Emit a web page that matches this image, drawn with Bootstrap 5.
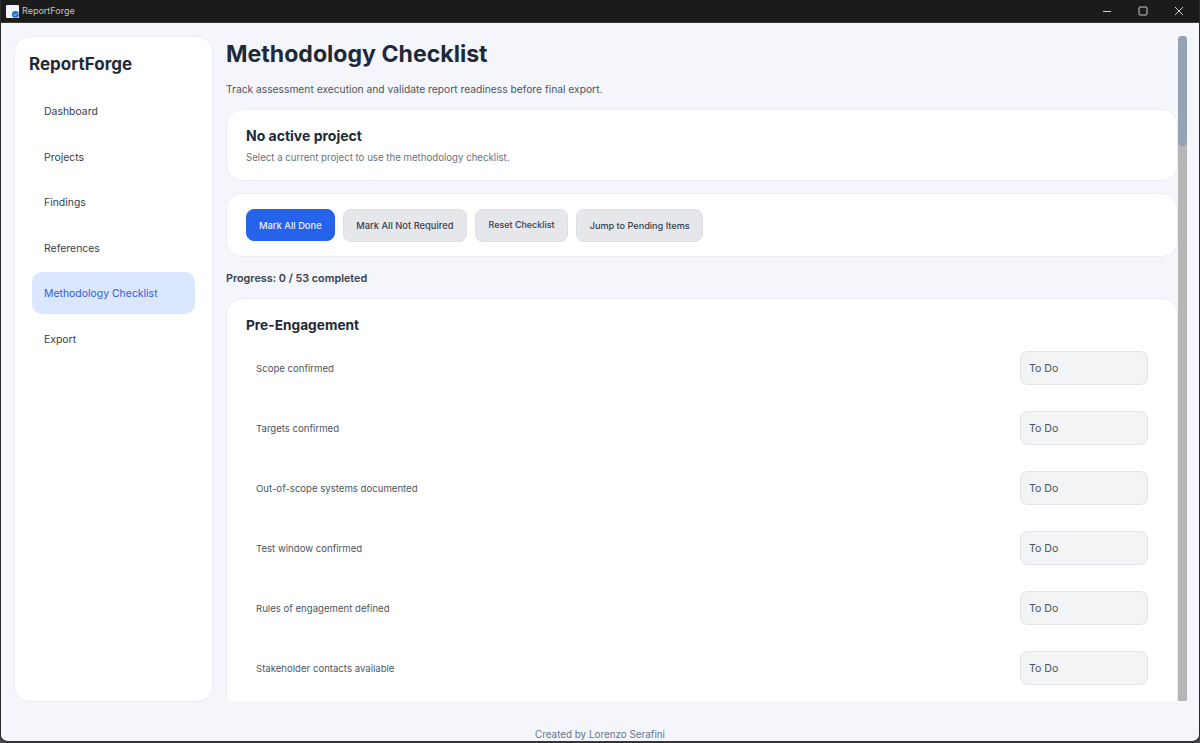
<!DOCTYPE html>
<html lang="en">
<head>
<meta charset="utf-8">
<title>ReportForge</title>
<link href="https://cdn.jsdelivr.net/npm/bootstrap@5.3.0/dist/css/bootstrap.min.css" rel="stylesheet">
<style>
html,body{height:743px;overflow:hidden;background:#4a4a4a}
body{font-family:Inter,"Liberation Sans",sans-serif;color:#1f2937}
.win-shell{width:1200px;height:743px;background:#f5f6fb;border-left:1px solid #2a2a2a;border-right:1px solid #2a2a2a;border-bottom:2px solid #333;border-radius:0 0 8px 8px;overflow:hidden}
.win-title{height:23px;margin:0 -1px;padding:0 3px 0 6px;background:#1b1b1b;color:#c4c4c4;font-size:9px;flex:none;border-bottom:1px solid #3a3a3a}
.win-ctrl{width:36px;height:23px}
.app-logo{width:13px;height:13px;margin-right:3px}
.app-body{min-height:0;padding:13px 12px 0 13px;gap:13px}
.side-panel{width:199px;height:666px;flex:none;background:#fff;border:1px solid #eceef4;border-radius:16px;padding:0 17px}
.brand-name{font-size:17px;font-weight:700;color:#1f2937;margin:16px 0 15px -3px;line-height:22px}
.side-link{display:block;height:42px;line-height:44px;margin:0 0 3.6px;padding:0 12px;border-radius:10px;font-size:10.45px;color:#374151;text-decoration:none}
.side-link.is-on{background:#dbe7fe;color:#2f5fd8}
.main-pane{width:952px;height:665px;flex:none;overflow:hidden}
.page-h{font-size:23.1px;font-weight:700;color:#1f2937;line-height:30px;margin:3px 0 0}
.page-sub{font-size:10.26px;color:#4b5563;line-height:14px;margin:13px 0 13px}
.panel-box{background:#fff;border:1px solid #eceef4;border-radius:16px;padding:0 19px}
.panel-h{font-size:14px;font-weight:700;color:#1f2937;line-height:18px}
.panel-sub-h{font-size:13.7px}
.panel-note{font-size:9.67px;color:#6b7280;line-height:13px}
.note-gap{gap:6px}
.act-btn{height:33px;font-size:9.35px;font-weight:500;color:#374151;background:#e5e7eb;border:1px solid #dcdee4;border-radius:8px;padding:1px 12.5px 0;line-height:1}
.act-btn.is-main{height:32px;padding:1px 12px 0;background:#2563eb;border-color:#2563eb;color:#e8efff}
.act-reset{font-size:8.95px}
.act-jump{font-size:9.15px}
.prog-line{font-size:10.8px;font-weight:600;color:#374151;line-height:14px;margin:15px 0 12px}
.chk-row{height:60px;padding:0 10px}
.chk-label{font-size:9.6px;color:#4b5563;padding-top:2px}
.chk-select{width:128px;height:34px;flex:none;padding:2px 8px 0;font-size:10.6px;color:#4b5563;background:#f3f4f6;border:1px solid #e1e3e9;border-radius:8px;appearance:none;font-family:inherit}
.scroll-track{width:9px;height:665px;flex:none;margin-left:-13px;background:#b5b5b5;border-radius:3px 3px 0 0;overflow:hidden}
.scroll-thumb{height:110px;background:#94a3b8;border-radius:4px}
.foot-note{height:41px;flex:none;font-size:9.85px;color:#64748b;line-height:12px;padding-top:28px}
</style>
</head>
<body>
<div class="win-shell d-flex flex-column">
  <div class="win-title d-flex align-items-center">
    <svg class="app-logo" viewBox="0 0 13 13"><rect width="13" height="13" rx="1" fill="#f2f4f8"/><circle cx="9.3" cy="9.4" r="3.4" fill="#1d6fd6"/><path d="M7.8 9.4l1.1 1.1 1.9-2" stroke="#fff" stroke-width=".8" fill="none"/></svg>
    <span>ReportForge</span>
    <div class="ms-auto d-flex">
      <div class="win-ctrl d-flex align-items-center justify-content-center"><svg width="10" height="10" viewBox="0 0 10 10"><path d="M1 5.5h8" stroke="#cfcfcf" stroke-width="1"/></svg></div>
      <div class="win-ctrl d-flex align-items-center justify-content-center"><svg width="10" height="10" viewBox="0 0 10 10"><rect x="1" y="1" width="8" height="8" rx="1" stroke="#cfcfcf" fill="none"/></svg></div>
      <div class="win-ctrl d-flex align-items-center justify-content-center"><svg width="10" height="10" viewBox="0 0 10 10"><path d="M1 1l8 8M9 1l-8 8" stroke="#cfcfcf" stroke-width="1"/></svg></div>
    </div>
  </div>
  <div class="app-body d-flex flex-grow-1">
    <nav class="side-panel">
      <div class="brand-name">ReportForge</div>
      <a class="side-link" href="#">Dashboard</a>
      <a class="side-link" href="#">Projects</a>
      <a class="side-link" href="#">Findings</a>
      <a class="side-link" href="#">References</a>
      <a class="side-link is-on" href="#">Methodology Checklist</a>
      <a class="side-link" href="#">Export</a>
    </nav>
    <main class="main-pane">
      <h1 class="page-h">Methodology Checklist</h1>
      <p class="page-sub">Track assessment execution and validate report readiness before final export.</p>
      <section class="panel-box d-flex flex-column justify-content-center mb-3 note-gap" style="height:72px">
        <div class="panel-h">No active project</div>
        <div class="panel-note">Select a current project to use the methodology checklist.</div>
      </section>
      <section class="panel-box d-flex align-items-center gap-2" style="height:64px;margin-top:-4px">
        <button class="act-btn is-main">Mark All Done</button>
        <button class="act-btn">Mark All Not Required</button>
        <button class="act-btn act-reset">Reset Checklist</button>
        <button class="act-btn act-jump">Jump to Pending Items</button>
      </section>
      <div class="prog-line">Progress: 0 / 53 completed</div>
      <section class="panel-box" style="padding-top:17px;height:480px">
        <div class="panel-h panel-sub-h" style="margin-bottom:4px">Pre-Engagement</div>
        <div class="chk-row d-flex align-items-center justify-content-between"><span class="chk-label">Scope confirmed</span><select class="chk-select"><option>To Do</option></select></div>
        <div class="chk-row d-flex align-items-center justify-content-between"><span class="chk-label">Targets confirmed</span><select class="chk-select"><option>To Do</option></select></div>
        <div class="chk-row d-flex align-items-center justify-content-between"><span class="chk-label">Out-of-scope systems documented</span><select class="chk-select"><option>To Do</option></select></div>
        <div class="chk-row d-flex align-items-center justify-content-between"><span class="chk-label">Test window confirmed</span><select class="chk-select"><option>To Do</option></select></div>
        <div class="chk-row d-flex align-items-center justify-content-between"><span class="chk-label">Rules of engagement defined</span><select class="chk-select"><option>To Do</option></select></div>
        <div class="chk-row d-flex align-items-center justify-content-between"><span class="chk-label">Stakeholder contacts available</span><select class="chk-select"><option>To Do</option></select></div>
      </section>
    </main>
    <div class="scroll-track"><div class="scroll-thumb"></div></div>
  </div>
  <footer class="foot-note text-center">Created by Lorenzo Serafini</footer>
</div>
<script src="https://cdn.jsdelivr.net/npm/bootstrap@5.3.0/dist/js/bootstrap.bundle.min.js"></script>
</body>
</html>
